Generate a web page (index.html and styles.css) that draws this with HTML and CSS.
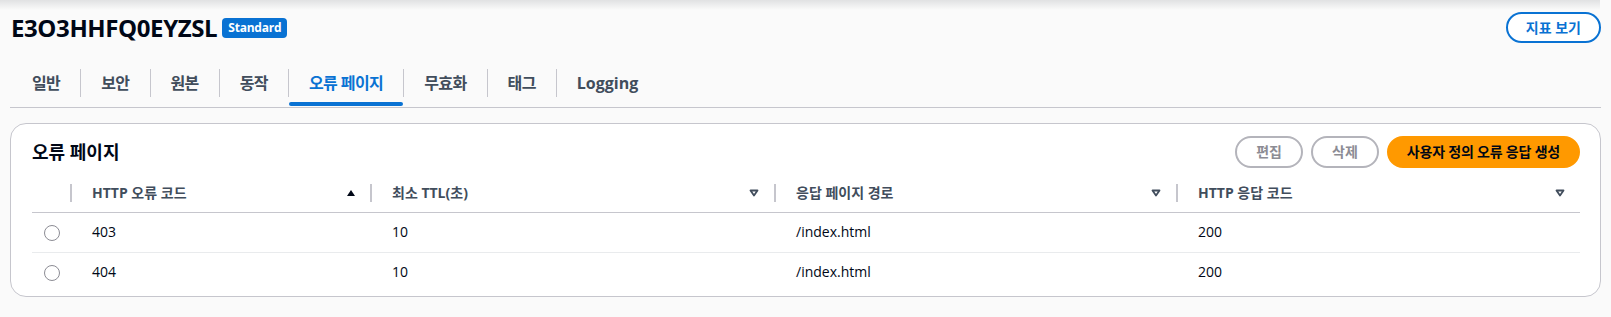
FILE: index.html
```html
<!DOCTYPE html>
<html lang="ko">
<head>
<meta charset="UTF-8">
<meta name="viewport" content="width=device-width, initial-scale=1.0">
<title>E3O3HHFQ0EYZSL</title>
<link rel="stylesheet" href="styles.css">
</head>
<body>
<div class="top-shadow"></div>
<div class="page">
    <header class="page-header">
        <div class="title-group">
            <h1 class="title">E3O3HHFQ0EYZSL</h1>
            <span class="badge">Standard</span>
        </div>
        <button class="btn btn-normal">지표 보기</button>
    </header>

    <nav class="tabs">
        <div class="tab"><span class="tab-label">일반</span></div>
        <div class="tab"><span class="tab-label">보안</span></div>
        <div class="tab"><span class="tab-label">원본</span></div>
        <div class="tab"><span class="tab-label">동작</span></div>
        <div class="tab active"><span class="tab-label">오류 페이지</span></div>
        <div class="tab"><span class="tab-label">무효화</span></div>
        <div class="tab"><span class="tab-label">태그</span></div>
        <div class="tab"><span class="tab-label latin">Logging</span></div>
    </nav>

    <section class="panel">
        <div class="panel-header">
            <h2 class="panel-title">오류 페이지</h2>
            <div class="actions">
                <button class="btn btn-disabled">편집</button>
                <button class="btn btn-disabled">삭제</button>
                <button class="btn btn-primary">사용자 정의 오류 응답 생성</button>
            </div>
        </div>

        <div class="table">
            <div class="row thead">
                <div class="th"></div>
                <div class="th col">
                    <span class="th-label">HTTP 오류 코드</span>
                    <svg class="sort" width="8" height="6" viewBox="0 0 8 6"><polygon points="0,6 8,6 4,0" fill="#000716"/></svg>
                </div>
                <div class="th col">
                    <span class="th-label">최소 TTL(초)</span>
                    <svg class="sort" width="10" height="8" viewBox="0 0 10 8"><polygon points="1.5,1.5 8.5,1.5 5,6.5" fill="#fff" stroke="#414d5c" stroke-width="1.8" stroke-linejoin="round"/></svg>
                </div>
                <div class="th col">
                    <span class="th-label">응답 페이지 경로</span>
                    <svg class="sort" width="10" height="8" viewBox="0 0 10 8"><polygon points="1.5,1.5 8.5,1.5 5,6.5" fill="#fff" stroke="#414d5c" stroke-width="1.8" stroke-linejoin="round"/></svg>
                </div>
                <div class="th col">
                    <span class="th-label">HTTP 응답 코드</span>
                    <svg class="sort" width="10" height="8" viewBox="0 0 10 8"><polygon points="1.5,1.5 8.5,1.5 5,6.5" fill="#fff" stroke="#414d5c" stroke-width="1.8" stroke-linejoin="round"/></svg>
                </div>
            </div>

            <div class="row tr">
                <div class="td select"><span class="radio"></span></div>
                <div class="td">403</div>
                <div class="td">10</div>
                <div class="td">/index.html</div>
                <div class="td">200</div>
            </div>
            <div class="row tr">
                <div class="td select"><span class="radio"></span></div>
                <div class="td">404</div>
                <div class="td">10</div>
                <div class="td">/index.html</div>
                <div class="td">200</div>
            </div>
        </div>
    </section>
</div>
</body>
</html>
```

FILE: styles.css
```css
body {
    margin: 0;
    background-color: #fafafa;
    font-family: "Open Sans", "Noto Sans CJK KR", sans-serif;
    color: #000716;
}
.top-shadow {
    height: 10px;
    margin-right: 11px;
    background: linear-gradient(rgba(0, 7, 22, 0.1), rgba(0, 7, 22, 0));
}
.page {
    padding: 0 10px;
}

/* header */
.page-header {
    display: flex;
    justify-content: space-between;
    align-items: center;
    height: 31px;
    margin-top: 2px;
}
.title-group {
    display: flex;
    align-items: center;
    gap: 5px;
    padding-top: 1px;
}
.title {
    margin: 0;
    padding-left: 1px;
    font-size: 24px;
    font-weight: 700;
    line-height: 30px;
    letter-spacing: -0.4px;
}
.badge {
    height: 20px;
    padding: 0 6px;
    border-radius: 4px;
    background-color: #0972d3;
    color: #fff;
    font-size: 12px;
    font-weight: 700;
    line-height: 20px;
    letter-spacing: -0.2px;
}

/* buttons */
.btn {
    height: 32px;
    padding: 0 19px;
    border: 2px solid;
    border-radius: 20px;
    background-color: #fff;
    font-family: inherit;
    font-size: 14px;
    font-weight: 700;
    line-height: 28px;
    cursor: pointer;
}
.btn-normal {
    height: 31px;
    padding: 0 18px;
    border-color: #0972d3;
    color: #0972d3;
}
.btn-disabled {
    border-color: #b4b4bb;
    color: #8c8c94;
    cursor: default;
}
.btn-primary {
    padding: 0 18px;
    border-color: #ff9900;
    background-color: #ff9900;
    color: #000716;
    letter-spacing: -0.2px;
}

/* tabs */
.tabs {
    display: flex;
    margin-top: 16px;
    border-bottom: 1px solid #c6c6cd;
}
.tab {
    position: relative;
    padding: 10px 0;
}
.tab-label {
    display: block;
    padding: 4px 20px;
    font-size: 16px;
    font-weight: 700;
    line-height: 20px;
    color: #414d5c;
    letter-spacing: -0.6px;
}
.tab-label.latin {
    letter-spacing: 0;
}
.tab:first-child .tab-label {
    padding-left: 22px;
}
.tab + .tab .tab-label {
    border-left: 1px solid #c6c6cd;
}
.tab.active .tab-label {
    color: #0972d3;
}
.tab.active::after {
    content: "";
    position: absolute;
    left: 1px;
    right: 0;
    bottom: 1px;
    height: 4px;
    border-radius: 2px;
    background-color: #0972d3;
}

/* panel */
.panel {
    margin-top: 15px;
    padding: 12px 20px 4px 21px;
    border: 1px solid #c6c6cd;
    border-radius: 16px;
    background-color: #fff;
}
.panel-header {
    display: flex;
    justify-content: space-between;
    align-items: center;
}
.panel-title {
    margin: 0;
    font-size: 18px;
    font-weight: 700;
    line-height: 32px;
}
.actions {
    display: flex;
    gap: 8px;
}

/* table */
.row {
    display: grid;
    grid-template-columns: 38px 300px 404px 402px 1fr;
}
.thead {
    margin-top: 6px;
    border-bottom: 1px solid #c6c6cd;
}
.th {
    display: flex;
    align-items: center;
    padding: 9px 15px 9px 0;
    font-size: 14px;
    font-weight: 700;
    line-height: 20px;
    color: #414d5c;
}
.th.col::before {
    content: "";
    width: 2px;
    height: 18px;
    margin-right: 20px;
    background-color: #c6c6cd;
}
.th-label {
    flex: 1;
}
.tr {
    border-bottom: 1px solid #e9ebed;
}
.tr:last-child {
    border-bottom: none;
}
.td {
    padding: 9px 0 10px 22px;
    font-size: 14px;
    line-height: 20px;
}
.td.select {
    display: flex;
    align-items: center;
    justify-content: center;
    padding: 0;
}
.radio {
    width: 14px;
    height: 14px;
    border: 1px solid #8c8c94;
    border-radius: 50%;
    margin-left: 2px;
}
```
